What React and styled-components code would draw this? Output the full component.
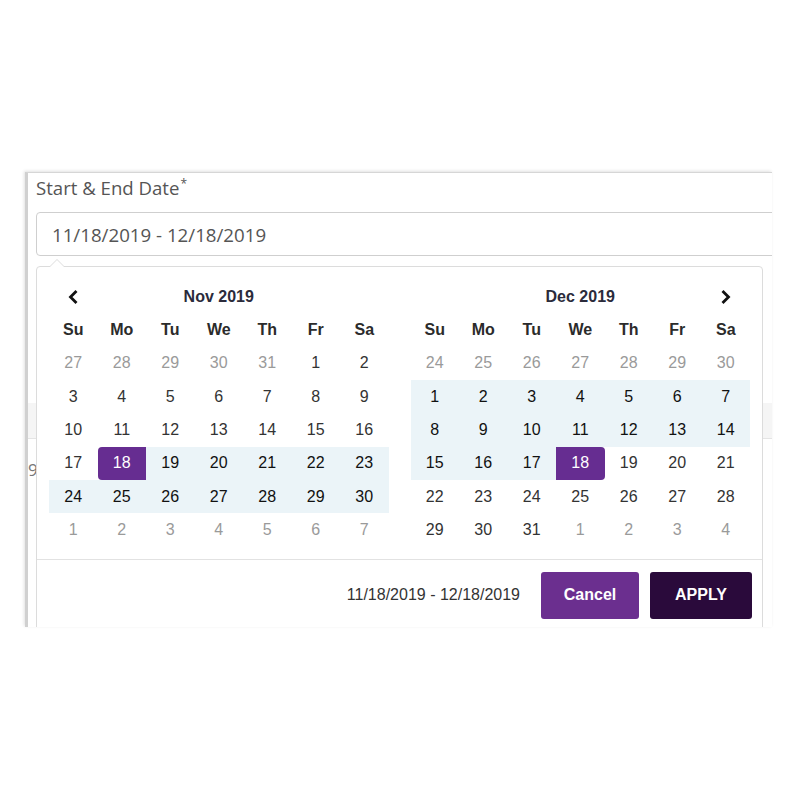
import React from "react";
import styled, { createGlobalStyle, css } from "styled-components";

const Global = createGlobalStyle`
  html, body { margin: 0; padding: 0; background: #fff; }
  body { width: 800px; height: 800px; font-family: "Liberation Sans", Arial, sans-serif; }
`;

const Page = styled.div`
  padding: 172px 28px 0 25px;
`;

const Card = styled.div`
  position: relative;
  width: 747px;
  height: 455px;
  box-sizing: border-box;
  overflow: hidden;
  background: #fff;
  border-top: 1px solid #d6d6d6;
  border-left: 3px solid #d0d0d0;
  box-shadow: -1px -1px 3px rgba(0, 0, 0, 0.12);
  padding: 0 0 0 8px;
`;

const Label = styled.div`
  font-family: "Open Sans", sans-serif;
  font-size: 18.6px;
  line-height: 26px;
  color: #555;
  padding-top: 2px;
  sup {
    font-size: 12px;
    vertical-align: top;
    position: relative;
    top: -4px;
    margin-left: 1px;
  }
`;

const Input = styled.div`
  margin-top: 11px;
  width: 760px;
  height: 44px;
  box-sizing: border-box;
  border: 1px solid #cfcfcf;
  border-radius: 4px;
  display: flex;
  align-items: center;
  padding-left: 15px;
  font-family: "Open Sans", sans-serif;
  font-size: 18.7px;
  color: #555;
`;

const Behind = styled.div`
  margin-top: 147px;
  margin-left: -8px;
`;

const BehindHead = styled.div`
  height: 35px;
  background: #f5f5f5;
  border-bottom: 1px solid #e4e4e4;
`;

const BehindRow = styled.div`
  height: 52px;
  display: flex;
  align-items: center;
  padding-left: 0;
  font-family: "Open Sans", sans-serif;
  font-size: 17px;
  color: #777;
  margin-top: 4px;
`;

const Dropdown = styled.div`
  position: absolute;
  left: 8px;
  top: 93px;
  width: 727px;
  height: 380px;
  box-sizing: border-box;
  background: #fff;
  border: 1px solid #dcdcdc;
  border-radius: 4px;
  &::before,
  &::after {
    content: "";
    position: absolute;
    left: 12px;
    border-left: 8px solid transparent;
    border-right: 8px solid transparent;
  }
  &::before {
    top: -8px;
    border-bottom: 8px solid #dcdcdc;
  }
  &::after {
    top: -7px;
    border-bottom: 8px solid #fff;
  }
`;

const Calendars = styled.div`
  display: flex;
  gap: 22px;
  padding: 13px 12px 12px 12px;
  border-bottom: 1px solid #e2e2e2;
`;

const Grid = styled.div`
  display: grid;
  grid-template-columns: repeat(7, 48.5px);
  grid-auto-rows: 33.33px;
`;

const Cell = styled.div`
  display: flex;
  align-items: center;
  justify-content: center;
  font-size: 16px;
  color: #333;
  ${(p) => p.$kind === "off" && css`color: #9a9a9a;`}
  ${(p) => p.$kind === "range" && css`background: #ebf4f8; color: #111;`}
  ${(p) =>
    (p.$kind === "start" || p.$kind === "end") &&
    css`
      background: #662d91;
      color: #fff;
    `}
  ${(p) => p.$kind === "start" && css`border-radius: 4px 0 0 4px;`}
  ${(p) => p.$kind === "end" && css`border-radius: 0 4px 4px 0;`}
`;

const WeekDay = styled(Cell)`
  font-weight: bold;
  color: #2b2b2b;
`;

const Title = styled.div`
  grid-column: 2 / span 5;
  display: flex;
  align-items: center;
  justify-content: center;
  font-weight: bold;
  font-size: 16px;
  color: #2b2b3b;
`;

const Arrow = styled.div`
  display: flex;
  align-items: center;
  justify-content: center;
  grid-column: ${(p) => p.$col};
`;

const Footer = styled.div`
  display: flex;
  justify-content: flex-end;
  align-items: center;
  padding: 12px 10px 0 0;
`;

const RangeText = styled.div`
  font-size: 16px;
  color: #333;
  margin-right: 21px;
`;

const Button = styled.button`
  height: 47px;
  width: ${(p) => p.$w}px;
  border: none;
  border-radius: 3px;
  font-family: "Liberation Sans", Arial, sans-serif;
  font-weight: bold;
  font-size: 16px;
  color: #fff;
  background: ${(p) => p.$bg};
  margin-left: ${(p) => p.$ml || 0}px;
  padding: 0;
`;

const Chevron = ({ dir }) => (
  <svg width="12" height="14" viewBox="0 0 12 14">
    <path
      d={dir === "left" ? "M8.5 2 L3.5 7 L8.5 12" : "M3.5 2 L8.5 7 L3.5 12"}
      fill="none"
      stroke="#111"
      strokeWidth="2.8"
      strokeLinecap="square"
    />
  </svg>
);

const days = ["Su", "Mo", "Tu", "We", "Th", "Fr", "Sa"];

function buildNov() {
  const cells = [];
  [27, 28, 29, 30, 31].forEach((d) => cells.push({ d, k: "off" }));
  for (let d = 1; d <= 30; d++) {
    let k = "normal";
    if (d === 18) k = "start";
    else if (d > 18) k = "range";
    cells.push({ d, k });
  }
  for (let d = 1; d <= 7; d++) cells.push({ d, k: "off" });
  return cells;
}

function buildDec() {
  const cells = [];
  [24, 25, 26, 27, 28, 29, 30].forEach((d) => cells.push({ d, k: "off" }));
  for (let d = 1; d <= 31; d++) {
    let k = "normal";
    if (d === 18) k = "end";
    else if (d < 18) k = "range";
    cells.push({ d, k });
  }
  for (let d = 1; d <= 4; d++) cells.push({ d, k: "off" });
  return cells;
}

function Month({ title, cells, prev, next }) {
  return (
    <Grid>
      {prev ? (
        <Arrow $col={1}>
          <Chevron dir="left" />
        </Arrow>
      ) : null}
      <Title>{title}</Title>
      {next ? (
        <Arrow $col={7}>
          <Chevron dir="right" />
        </Arrow>
      ) : (
        <div />
      )}
      {days.map((d) => (
        <WeekDay key={d}>{d}</WeekDay>
      ))}
      {cells.map((c, i) => (
        <Cell key={i} $kind={c.k}>
          {c.d}
        </Cell>
      ))}
    </Grid>
  );
}

export default function App() {
  return (
    <>
      <Global />
      <Page>
        <Card>
          <Label>
            Start &amp; End Date<sup>*</sup>
          </Label>
          <Input>11/18/2019 - 12/18/2019</Input>
          <Behind>
            <BehindHead />
            <BehindRow>9</BehindRow>
          </Behind>
          <Dropdown>
            <Calendars>
              <Month title="Nov 2019" cells={buildNov()} prev />
              <Month title="Dec 2019" cells={buildDec()} next />
            </Calendars>
            <Footer>
              <RangeText>11/18/2019 - 12/18/2019</RangeText>
              <Button $w={98} $bg="#6b2f8f">Cancel</Button>
              <Button $w={102} $bg="#2a0a3b" $ml={11}>APPLY</Button>
            </Footer>
          </Dropdown>
        </Card>
      </Page>
    </>
  );
}
